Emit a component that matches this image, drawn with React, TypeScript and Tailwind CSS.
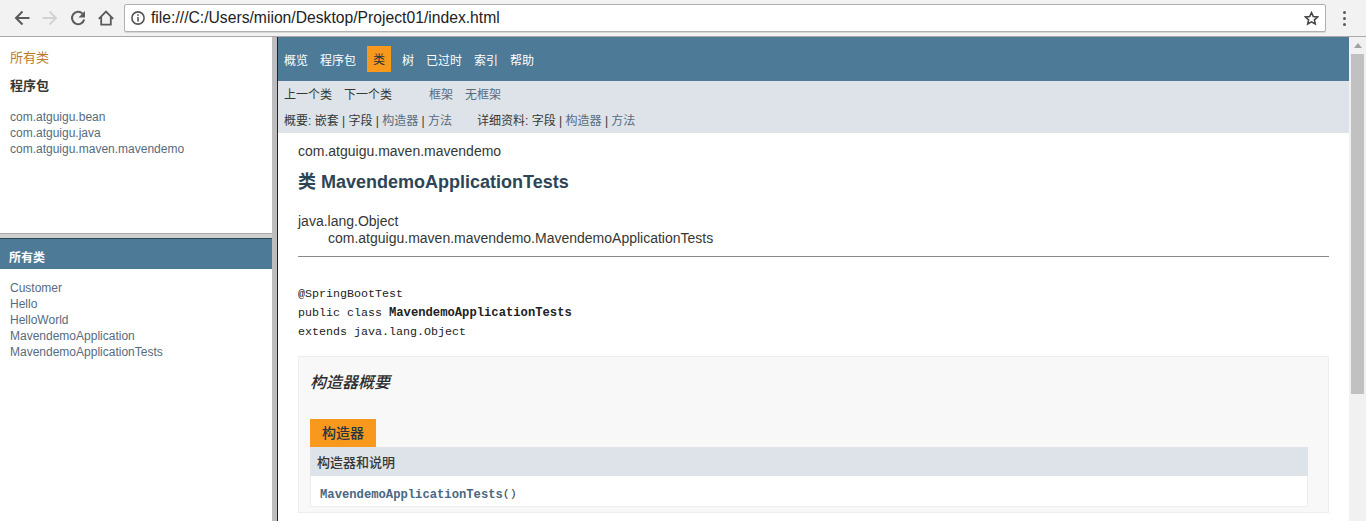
import React from "react";

const sans = "font-['Arial','Liberation_Sans','Noto_Sans_CJK_SC',sans-serif]";
const mono = "font-['Liberation_Mono','Noto_Sans_CJK_SC',monospace]";

function Toolbar() {
  return (
    <div className="flex h-[37px] shrink-0 items-center border-b border-[#a9a9a9] bg-[#f2f2f2]">
      <div className="flex w-[124px] shrink-0 items-center gap-[12px] pl-[14px]">
        <svg width="16" height="16" viewBox="0 0 16 16" fill="none" stroke="#5a5a5a" strokeWidth="2">
          <path d="M15.5 8H2.5M8.5 1.5 2 8l6.5 6.5" />
        </svg>
        <svg width="16" height="16" viewBox="0 0 16 16" fill="none" stroke="#d2d2d2" strokeWidth="2">
          <path d="M.5 8h13M7.5 1.5 14 8l-6.5 6.5" />
        </svg>
        <svg width="16" height="16" viewBox="0 0 16 16" fill="none" stroke="#5a5a5a" strokeWidth="2">
          <path d="M12.6 3.6A6.2 6.2 0 1 0 14.2 9.6" />
          <path d="M15 1v6.6H8.4z" fill="#5a5a5a" stroke="none" />
        </svg>
        <svg width="16" height="16" viewBox="0 0 16 16" fill="none" stroke="#5a5a5a" strokeWidth="1.8">
          <path d="M.8 8.8 8 1.6l7.2 7.2M3.2 7v7.6h9.6V7" />
        </svg>
      </div>
      <div className="flex h-[28px] w-[1202px] shrink-0 items-center rounded-[2px] border border-[#b0b0b0] bg-white shadow-[0_1px_0_#d8d8d8]">
        <svg className="ml-[6px] shrink-0" width="14" height="14" viewBox="0 0 14 14" fill="none" stroke="#555" strokeWidth="1.6">
          <circle cx="7" cy="7" r="6.1" />
          <path d="M7 6v4.4M7 3.2v1.6" />
        </svg>
        <span className={`ml-[6px] text-[15.7px] text-[#222] ${sans}`}>file:///C:/Users/miion/Desktop/Project01/index.html</span>
        <svg className="ml-auto mr-[6px]" width="15" height="15" viewBox="0 0 16 16" fill="none" stroke="#444" strokeWidth="1.7">
          <path d="m8 1.8 1.9 4.1 4.5.5-3.3 3 .9 4.4L8 11.6l-4 2.2.9-4.4-3.3-3 4.5-.5z" />
        </svg>
      </div>
      <div className="ml-[17px] flex flex-col gap-[3px]">
        <div className="h-[3px] w-[3px] rounded-full bg-[#5a5a5a]" />
        <div className="h-[3px] w-[3px] rounded-full bg-[#5a5a5a]" />
        <div className="h-[3px] w-[3px] rounded-full bg-[#5a5a5a]" />
      </div>
    </div>
  );
}

function LeftFrames() {
  return (
    <div className="flex w-[272px] shrink-0 flex-col">
      <div className="h-[196px] bg-white px-[10px] pt-[12px]">
        <div className="text-[13px] leading-[17px] text-[#bb7a2a]">所有类</div>
        <div className="mt-[11px] text-[13px] font-bold leading-[17px] text-[#353833]">程序包</div>
        <div className="mt-[15px] flex flex-col text-[12px] leading-[16px] text-[#566b7e]">
          <span>com.atguigu.bean</span>
          <span>com.atguigu.java</span>
          <span>com.atguigu.maven.mavendemo</span>
        </div>
      </div>
      <div className="h-[5px] border-t border-[#a9a9a9] bg-[#cfcfcf]" />
      <div className="flex h-[31px] items-center border-t border-[#2c4557] bg-[#4d7a97] pl-[9px] pt-[8px] text-[12px] font-bold text-white">所有类</div>
      <div className="flex flex-1 flex-col bg-white px-[10px] pt-[11px] text-[12px] leading-[16px] text-[#566b7e]">
        <span>Customer</span>
        <span>Hello</span>
        <span>HelloWorld</span>
        <span>MavendemoApplication</span>
        <span>MavendemoApplicationTests</span>
      </div>
    </div>
  );
}

function TopNav() {
  return (
    <div className="flex h-[44px] items-center bg-[#4d7a97] pl-[6px] text-[12px] text-white">
      <span className="pt-[4px]">概览</span>
      <span className="ml-[12px] pt-[4px]">程序包</span>
      <span className="ml-[11px] flex h-[26px] w-[24px] items-center justify-center bg-[#f8981d] pt-[2px] text-[#253441]">类</span>
      <span className="ml-[11px] pt-[4px]">树</span>
      <span className="ml-[12px] pt-[4px]">已过时</span>
      <span className="ml-[12px] pt-[4px]">索引</span>
      <span className="ml-[12px] pt-[4px]">帮助</span>
    </div>
  );
}

function SubNav() {
  return (
    <div className="flex h-[52px] flex-col bg-[#dee3e9] pl-[6px] text-[12px] text-[#353833]">
      <div className="mt-[5px] flex h-[17px] items-center">
        <span>上一个类</span>
        <span className="ml-[12px]">下一个类</span>
        <span className="ml-[37px] text-[#566b7e]">框架</span>
        <span className="ml-[12px] text-[#566b7e]">无框架</span>
      </div>
      <div className="mt-[9px] flex h-[17px] items-center whitespace-pre">
        <span>概要: 嵌套 | 字段 | <span className="text-[#566b7e]">构造器</span> | <span className="text-[#566b7e]">方法</span></span>
        <span className="ml-[25px]">详细资料: 字段 | <span className="text-[#566b7e]">构造器</span> | <span className="text-[#566b7e]">方法</span></span>
      </div>
    </div>
  );
}

function ClassBody() {
  return (
    <div className="flex-1 overflow-hidden bg-white pl-[20px] pr-[20px] text-[#353833]">
      <div className="mt-[9px] text-[14px] leading-[18px]">com.atguigu.maven.mavendemo</div>
      <h2 className="mt-[11px] text-[18px] font-bold leading-[22px] text-[#2c4557]">类 MavendemoApplicationTests</h2>
      <div className="mt-[20px] text-[14px] leading-[17px]">java.lang.Object</div>
      <div className="pl-[30px] text-[14px] leading-[17px]">com.atguigu.maven.mavendemo.MavendemoApplicationTests</div>
      <div className="mt-[9px] border-t border-[#8a8a8a]" />
      <div className={`mt-[28px] flex flex-col text-[11.67px] leading-[19px] text-[#222] ${mono}`}>
        <span>@SpringBootTest</span>
        <span>public class <b className="text-[12.2px]">MavendemoApplicationTests</b></span>
        <span>extends java.lang.Object</span>
      </div>
      <div className="mt-[14px] h-[157px] border border-[#ededed] bg-[#f8f8f8] px-[11px]">
        <h3 className="mt-[15px] text-[16px] font-medium italic leading-[22px] text-[#2c2c2c]">构造器概要</h3>
        <div className="mt-[25px] flex h-[28px] w-[66px] items-center justify-center bg-[#f8981d] text-[14px] font-medium text-[#253441]">构造器</div>
        <div className="flex h-[29px] w-[998px] items-center bg-[#dee3e9] pl-[7px] pt-[3px] text-[13px] font-medium">构造器和说明</div>
        <div className={`flex h-[31px] w-[998px] items-center border-b border-l border-r border-[#ededed] bg-white pl-[9px] pt-[8px] text-[11.67px] ${mono}`}>
          <b className="text-[12.2px] text-[#4a6782]">MavendemoApplicationTests</b>()
        </div>
      </div>
    </div>
  );
}

function Scrollbar() {
  return (
    <div className="flex w-[17px] shrink-0 flex-col items-center bg-[#f1f1f1]">
      <div className="mt-[6px] h-0 w-0 border-b-[5px] border-l-[4px] border-r-[4px] border-b-[#a3a3a3] border-l-transparent border-r-transparent" />
      <div className="mt-[6px] h-[340px] w-[13px] bg-[#c1c1c1]" />
    </div>
  );
}

export default function App() {
  return (
    <div className={`flex h-[521px] w-[1366px] flex-col overflow-hidden bg-white ${sans}`}>
      <Toolbar />
      <div className="flex min-h-0 flex-1">
        <LeftFrames />
        <div className="w-[5px] shrink-0 bg-[#bdbdbd]" />
        <div className="w-px shrink-0 bg-[#222]" />
        <div className="flex min-w-0 flex-1 flex-col">
          <TopNav />
          <SubNav />
          <ClassBody />
        </div>
        <Scrollbar />
      </div>
    </div>
  );
}
